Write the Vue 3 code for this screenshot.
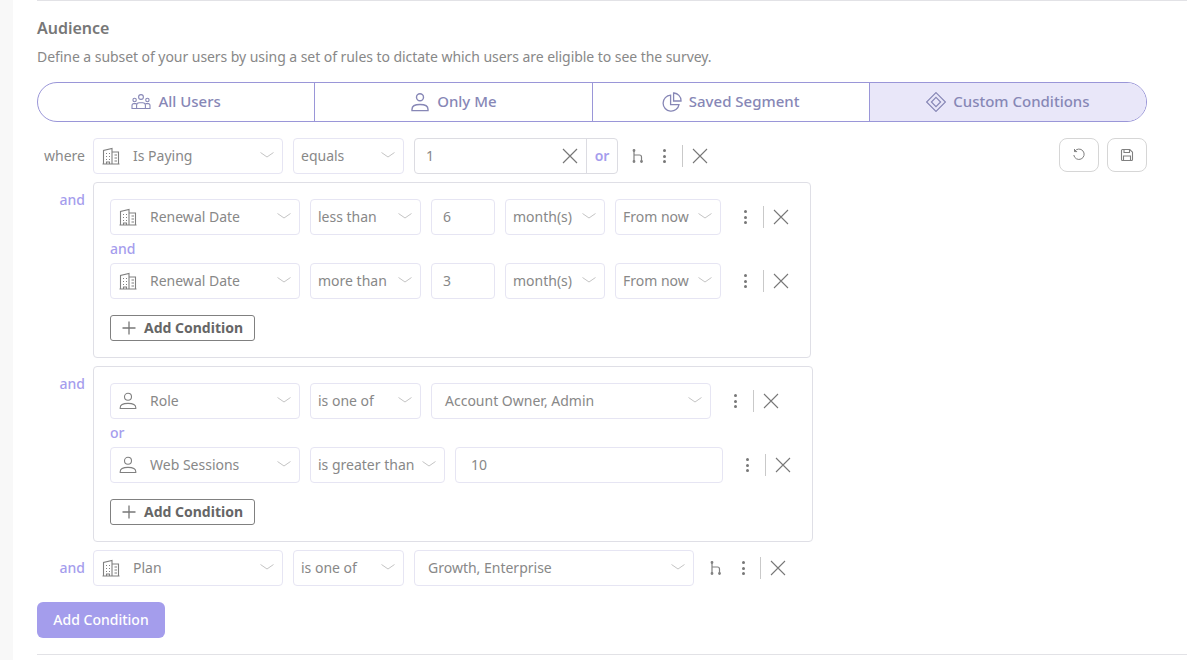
<script setup>
const segments = [
  { label: 'All Users', icon: 'users' },
  { label: 'Only Me', icon: 'person' },
  { label: 'Saved Segment', icon: 'pie' },
  { label: 'Custom Conditions', icon: 'diamond', active: true },
]
const s = (text, width, icon) => ({ kind: 'select', text, width, icon })
const groups = [
  {
    cls: 'box-a', label: 'and', joiner: 'and',
    rows: [
      { fields: [s('Renewal Date', 'w190', 'building'), s('less than', 'w111'), { kind: 'input', text: '6', width: 'w64' }, s('month(s)', 'w100'), s('From now', 'w106')], act: 'act-a' },
      { fields: [s('Renewal Date', 'w190', 'building'), s('more than', 'w111'), { kind: 'input', text: '3', width: 'w64' }, s('month(s)', 'w100'), s('From now', 'w106')], act: 'act-a' },
    ],
  },
  {
    cls: 'box-b', label: 'and', joiner: 'or',
    rows: [
      { fields: [s('Role', 'w190', 'person'), s('is one of', 'w111'), { kind: 'select', text: 'Account Owner, Admin', width: 'w280', wide: true }], act: 'act-b' },
      { fields: [s('Web Sessions', 'w190', 'person'), s('is greater than', 'w135'), { kind: 'input', text: '10', width: 'w268', wide: true }], act: 'act-c' },
    ],
  },
]
</script>

<template>
  <div class="page">
    <main class="main">
      <section class="audience">
        <h2 class="title">Audience</h2>
        <p class="desc">Define a subset of your users by using a set of rules to dictate which users are eligible to see the survey.</p>

        <div class="seg">
          <div v-for="g in segments" :key="g.label" class="seg-item" :class="{ on: g.active }">
            <svg v-if="g.icon === 'users'" class="seg-ico" viewBox="0 0 20 20" fill="none" stroke="currentColor" stroke-width="1.1">
              <circle cx="10" cy="5" r="2.4"/><circle cx="3.6" cy="8" r="1.7"/><circle cx="16.4" cy="8" r="1.7"/>
              <path d="M5.6 16.5v-3.2a2.6 2.6 0 0 1 2.6-2.6h3.6a2.6 2.6 0 0 1 2.6 2.6v3.2z"/>
              <path d="M5.6 11.6H2.8A1.8 1.8 0 0 0 1 13.4v3.1h4.6M14.4 11.6h2.8a1.8 1.8 0 0 1 1.8 1.8v3.1h-4.6"/>
            </svg>
            <svg v-else-if="g.icon === 'person'" class="seg-ico" viewBox="0 0 20 20" fill="none" stroke="currentColor" stroke-width="1.4">
              <circle cx="10" cy="5.200" r="3.500"/>
              <path d="M2 18.600v-1.400c0-3 3-4.700 8-4.700s8 1.700 8 4.700v1.400z"/>
            </svg>
            <svg v-else-if="g.icon === 'pie'" class="seg-ico" viewBox="0 0 20 20" fill="none" stroke="currentColor" stroke-width="1.300">
              <path d="M8.600 3.200a8 8 0 1 0 8.400 9.400H8.600z"/>
              <path d="M11.600 1h.4a7.600 7.600 0 0 1 7 7.400v.6h-7.400z"/>
            </svg>
            <svg v-else class="seg-ico" viewBox="0 0 20 20" fill="none" stroke="currentColor" stroke-width="1.200">
              <path d="M10 .6 19.400 10 10 19.400 .6 10z"/><path d="M10 5.400 14.600 10 10 14.600 5.400 10z"/>
            </svg>
            <span class="seg-label">{{ g.label }}</span>
          </div>
        </div>

        <div class="rule first">
          <span class="lab where">where</span>
          <div class="ctl select w190">
            <svg class="ico" viewBox="0 0 18 18" fill="none" stroke="currentColor" stroke-width="1.100"><path d="M1.500 17V3.500L10 1.500V17M10 5h6.500v12M.5 17h17M4 6.500h1M7 6.500h1M4 9.500h1M7 9.500h1M4 12.500h1M7 12.500h1M12.500 8H15M12.500 11H15M12.500 14H15M4.500 17v-2h3v2"/></svg>
            <span class="txt with-ico">Is Paying</span>
            <svg class="chev" viewBox="0 0 14 6" fill="none" stroke="currentColor"><path d="M.5.5 7 5l6.500-4.500"/></svg>
          </div>
          <div class="ctl select w111">
            <span class="txt">equals</span>
            <svg class="chev" viewBox="0 0 14 6" fill="none" stroke="currentColor"><path d="M.5.5 7 5l6.500-4.500"/></svg>
          </div>
          <div class="ctl combo">
            <span class="txt val">1</span>
            <svg class="x in-combo" viewBox="0 0 16 16" fill="none" stroke="currentColor" stroke-width="1.200"><path d="M1 1l14 14M15 1 1 15"/></svg>
            <span class="or">or</span>
          </div>
          <div class="acts act-first">
            <svg class="branch" viewBox="0 0 12 14" fill="none" stroke="currentColor" stroke-width="1.200"><path d="M2 2v10M2 6h5.500a2 2 0 0 1 2 2v4"/><circle cx="2" cy="1.500" r=".8" fill="currentColor"/><circle cx="2" cy="12.500" r=".8" fill="currentColor"/><circle cx="9.500" cy="12.500" r=".8" fill="currentColor"/></svg>
            <span class="dots"><i></i><i></i><i></i></span>
            <span class="sep"></span>
            <svg class="x" viewBox="0 0 16 16" fill="none" stroke="currentColor" stroke-width="1.100"><path d="M1 1l14 14M15 1 1 15"/></svg>
          </div>
          <div class="tools">
            <button class="tool">
              <svg viewBox="0 0 14 14" fill="none" stroke="currentColor" stroke-width="1"><path d="M2.600 3.400A5.200 5.200 0 1 1 1.800 7"/><path d="M2.500 1v2.600h2.600"/></svg>
            </button>
            <button class="tool">
              <svg viewBox="0 0 14 14" fill="none" stroke="currentColor" stroke-width="1.100"><path d="M1.500 2.500a1 1 0 0 1 1-1h7.300l2.700 2.700v7.300a1 1 0 0 1-1 1h-9a1 1 0 0 1-1-1z"/><path d="M4 1.500v3h5.500v-3M3.500 12.500V8h7v4.500"/></svg>
            </button>
          </div>
        </div>

        <div v-for="g in groups" :key="g.cls" class="group">
          <span class="lab and">{{ g.label }}</span>
          <div class="box" :class="g.cls">
            <template v-for="(r, i) in g.rows" :key="i">
              <div v-if="i" class="joiner">{{ g.joiner }}</div>
              <div class="row">
                <template v-for="f in r.fields" :key="f.text">
                  <div class="ctl" :class="[f.kind, f.width, { wide: f.wide }]">
                    <svg v-if="f.icon === 'building'" class="ico" viewBox="0 0 18 18" fill="none" stroke="currentColor" stroke-width="1.100"><path d="M1.500 17V3.500L10 1.500V17M10 5h6.500v12M.5 17h17M4 6.500h1M7 6.500h1M4 9.500h1M7 9.500h1M4 12.500h1M7 12.500h1M12.500 8H15M12.500 11H15M12.500 14H15M4.500 17v-2h3v2"/></svg>
                    <svg v-else-if="f.icon === 'person'" class="ico" viewBox="0 0 18 18" fill="none" stroke="currentColor" stroke-width="1.100"><circle cx="9" cy="4.800" r="3.500"/><path d="M1.200 16.500v-.8c0-2.700 3.200-4.300 7.800-4.300s7.800 1.600 7.800 4.300v.8z"/></svg>
                    <span class="txt" :class="{ 'with-ico': f.icon }">{{ f.text }}</span>
                    <svg v-if="f.kind === 'select'" class="chev" viewBox="0 0 14 6" fill="none" stroke="currentColor"><path d="M.5.5 7 5l6.500-4.500"/></svg>
                  </div>
                </template>
                <div class="acts" :class="r.act">
                  <span class="dots"><i></i><i></i><i></i></span>
                  <span class="sep"></span>
                  <svg class="x" viewBox="0 0 16 16" fill="none" stroke="currentColor" stroke-width="1.100"><path d="M1 1l14 14M15 1 1 15"/></svg>
                </div>
              </div>
            </template>
            <button class="add-out">
              <svg viewBox="0 0 14 14" fill="none" stroke="currentColor" stroke-width="1.300"><path d="M7 .5v13M.5 7h13"/></svg>
              <span>Add Condition</span>
            </button>
          </div>
        </div>

        <div class="rule">
          <span class="lab and-mid">and</span>
          <div class="ctl select w190">
            <svg class="ico" viewBox="0 0 18 18" fill="none" stroke="currentColor" stroke-width="1.100"><path d="M1.500 17V3.500L10 1.500V17M10 5h6.500v12M.5 17h17M4 6.500h1M7 6.500h1M4 9.500h1M7 9.500h1M4 12.500h1M7 12.500h1M12.500 8H15M12.500 11H15M12.500 14H15M4.500 17v-2h3v2"/></svg>
            <span class="txt with-ico">Plan</span>
            <svg class="chev" viewBox="0 0 14 6" fill="none" stroke="currentColor"><path d="M.5.5 7 5l6.500-4.500"/></svg>
          </div>
          <div class="ctl select w111">
            <span class="txt">is one of</span>
            <svg class="chev" viewBox="0 0 14 6" fill="none" stroke="currentColor"><path d="M.5.5 7 5l6.500-4.500"/></svg>
          </div>
          <div class="ctl select w280 wide">
            <span class="txt">Growth, Enterprise</span>
            <svg class="chev" viewBox="0 0 14 6" fill="none" stroke="currentColor"><path d="M.5.5 7 5l6.500-4.500"/></svg>
          </div>
          <div class="acts act-last">
            <svg class="branch" viewBox="0 0 12 14" fill="none" stroke="currentColor" stroke-width="1.200"><path d="M2 2v10M2 6h5.500a2 2 0 0 1 2 2v4"/><circle cx="2" cy="1.500" r=".8" fill="currentColor"/><circle cx="2" cy="12.500" r=".8" fill="currentColor"/><circle cx="9.500" cy="12.500" r=".8" fill="currentColor"/></svg>
            <span class="dots"><i></i><i></i><i></i></span>
            <span class="sep"></span>
            <svg class="x" viewBox="0 0 16 16" fill="none" stroke="currentColor" stroke-width="1.100"><path d="M1 1l14 14M15 1 1 15"/></svg>
          </div>
        </div>

        <button class="add-main">Add Condition</button>
      </section>
    </main>
  </div>
</template>

<style scoped>
.page {
  width: 1187px;
  height: 660px;
  overflow: hidden;
  background: #f8f8f8;
  padding-left: 13px;
  box-sizing: border-box;
  font-family: "Noto Sans", "Open Sans", sans-serif;
  font-size: 14px;
  color: #888;
}
.main {
  background: #fff;
  height: 100%;
  padding-left: 24px;
}
.audience {
  height: 655px;
  width: 1150px;
  box-sizing: border-box;
  border-top: 1px solid #e2e2e6;
  border-bottom: 1px solid #e2e2e6;
}
.title {
  margin: 16px 0 0;
  font-size: 16px;
  line-height: 22px;
  font-weight: 600;
  color: #777;
}
.desc {
  margin: 7px 0 0;
  font-size: 14px;
  line-height: 22px;
  letter-spacing: -0.055px;
  color: #888;
}
.seg {
  display: flex;
  width: 1110px;
  height: 40px;
  margin-top: 14px;
  box-sizing: border-box;
  border: 1px solid #9a96d8;
  border-radius: 20px;
  overflow: hidden;
  color: #8787b6;
}
.seg-item {
  flex: 1;
  display: flex;
  align-items: center;
  justify-content: center;
  gap: 7px;
  font-size: 15px;
  font-weight: 500;
  border-left: 1px solid #9a96d8;
}
.seg-item:first-child { border-left: 0; }
.seg-item.on { background: #e9e7f9; }
.seg-label { padding-bottom: 2px; }
.seg-ico { width: 20px; height: 20px; }
.rule {
  display: flex;
  align-items: center;
  gap: 10px;
  margin-top: 16px;
}
.first { width: 1110px; }
.lab {
  width: 48px;
  margin-right: -2px;
  text-align: right;
  line-height: 20px;
  flex: none;
}
.where { color: #888; }
.and, .and-mid { color: #a59ded; font-weight: 500; }
.group {
  display: flex;
  align-items: flex-start;
  gap: 8px;
  margin-top: 8px;
}
.group .lab { margin: 8px 0 0; }
.group + .rule { margin-top: 8px; }
.box {
  box-sizing: border-box;
  border: 1px solid #dfdfe6;
  border-radius: 4px;
  padding: 16px;
  height: 176px;
}
.box-a { width: 718px; }
.box-b { width: 720px; }
.row {
  display: flex;
  align-items: center;
  gap: 10px;
  height: 36px;
}
.joiner {
  height: 28px;
  line-height: 28px;
  color: #a59ded;
  font-weight: 500;
}
.ctl {
  position: relative;
  display: flex;
  align-items: center;
  flex: none;
  box-sizing: border-box;
  height: 36px;
  background: #fff;
  border: 1px solid #e6e5f3;
  border-radius: 4px;
  padding-left: 7px;
}
.input { padding-left: 11px; }
.input.wide { padding-left: 15px; }
.select.wide { padding-left: 13px; }
.w190 { width: 190px; }
.w111 { width: 111px; }
.w64 { width: 64px; }
.w100 { width: 100px; }
.w106 { width: 106px; }
.w280 { width: 280px; }
.w135 { width: 135px; }
.w268 { width: 268px; }
.ico { width: 18px; height: 18px; margin-left: 1px; color: #808080; flex: none; }
.txt { white-space: nowrap; line-height: 20px; }
.with-ico { margin-left: 13px; }
.chev {
  position: absolute;
  right: 8px;
  top: 13px;
  width: 14px;
  height: 6px;
  color: #c4c4c4;
}
.combo {
  width: 204px;
  border-color: #dcdce2;
  padding-left: 11px;
}
.val { flex: 1; }
.x { width: 16px; height: 16px; color: #777; flex: none; }
.in-combo { margin-right: 8px; }
.or {
  width: 30px;
  height: 100%;
  border-left: 1px solid #dcdce2;
  color: #a59ded;
  font-weight: 600;
  text-align: center;
  line-height: 34px;
}
.acts {
  display: flex;
  align-items: center;
  flex: none;
}
.branch { width: 12px; height: 14px; color: #808080; }
.dots {
  display: flex;
  flex-direction: column;
  gap: 2.500px;
  width: 3px;
}
.dots i {
  display: block;
  width: 3px;
  height: 3px;
  border-radius: 50%;
  background: #777;
}
.sep {
  width: 1px;
  height: 22px;
  background: #c9c9c9;
  margin: 0 9px 0 16px;
}
.act-first { margin-left: 4px; }
.act-first .branch { margin-right: 19px; }
.act-last { margin-left: 6px; }
.act-last .branch { margin-right: 20px; }
.act-last .sep { margin-left: 15px; }
.act-a { margin-left: 13px; }
.act-b { margin-left: 13px; }
.act-c { margin-left: 13px; }
.tools {
  display: flex;
  gap: 8px;
  margin-left: auto;
  align-self: flex-start;
}
.tool {
  width: 40px;
  height: 34px;
  background: #fff;
  border: 1px solid #d6d6d6;
  border-radius: 8px;
  padding: 0;
  color: #808080;
  display: flex;
  align-items: center;
  justify-content: center;
}
.tool svg { width: 14px; height: 14px; }
.add-out {
  display: flex;
  align-items: center;
  gap: 8px;
  margin-top: 16px;
  width: 145px;
  height: 26px;
  box-sizing: border-box;
  padding: 0 0 2px 11px;
  background: #fff;
  border: 1px solid #808080;
  border-radius: 3px;
  font-family: inherit;
  font-size: 14px;
  font-weight: 700;
  color: #666;
}
.add-out svg { width: 14px; height: 14px; color: #777; flex: none; position: relative; top: 1px; }
.add-main {
  display: block;
  margin-top: 16px;
  width: 128px;
  height: 36px;
  padding: 0 0 2px;
  background: #a49dec;
  border: 0;
  border-radius: 6px;
  color: #fff;
  font-family: inherit;
  font-size: 14px;
  font-weight: 500;
}
</style>
